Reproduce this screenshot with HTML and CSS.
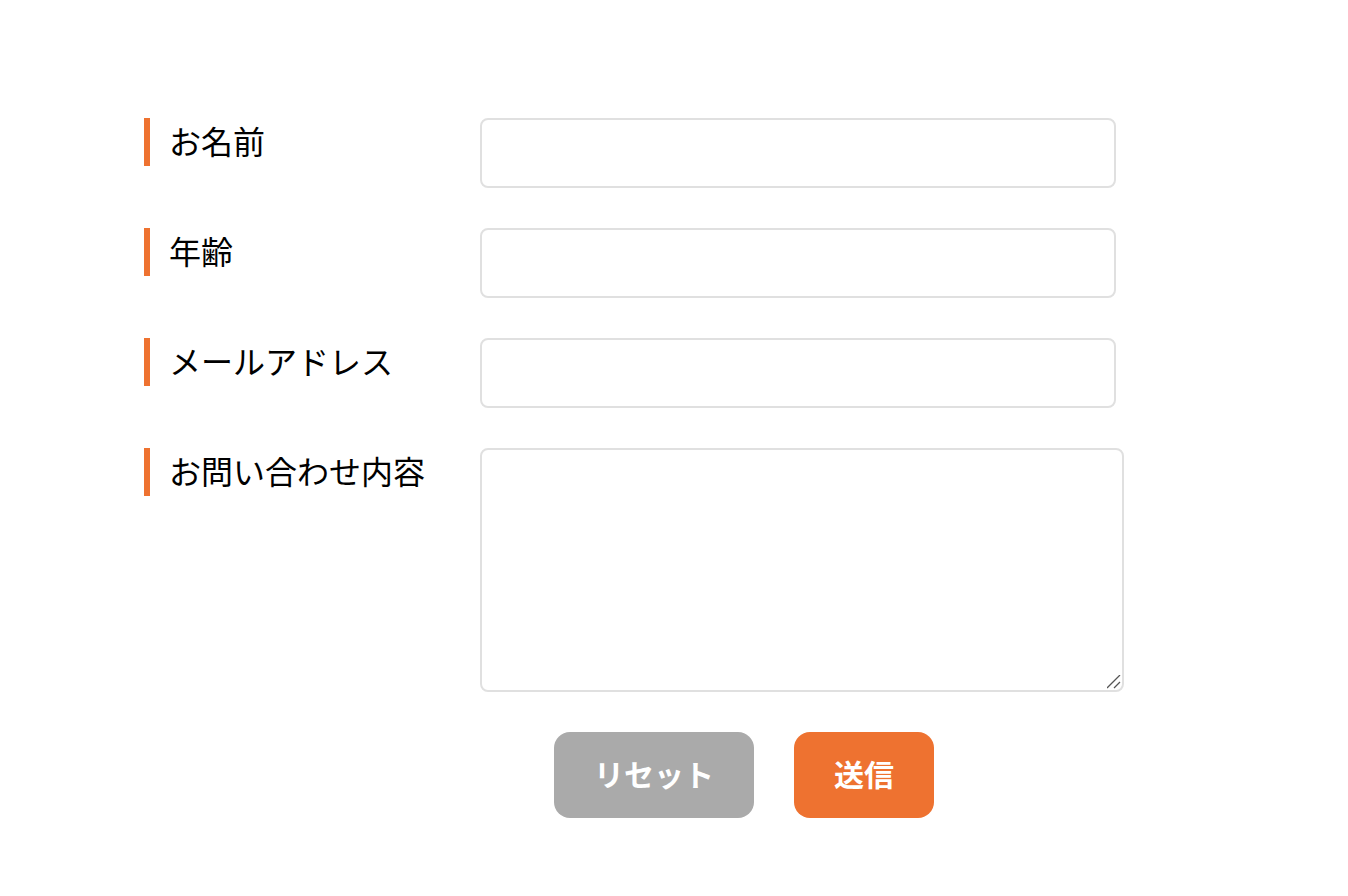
FILE: index.html
```html
<!DOCTYPE html>
<html lang="ja">
<head>
<meta charset="utf-8">
<title>お問い合わせ</title>
<link rel="stylesheet" href="styles.css">
</head>
<body>
<form class="form">
  <div class="row">
    <label class="label">お名前</label>
    <input class="field" type="text">
  </div>
  <div class="row">
    <label class="label">年齢</label>
    <input class="field" type="text">
  </div>
  <div class="row">
    <label class="label">メールアドレス</label>
    <input class="field" type="text">
  </div>
  <div class="row">
    <label class="label">お問い合わせ内容</label>
    <textarea class="area"></textarea>
  </div>
  <div class="buttons">
    <button type="button" class="btn btn-reset">リセット</button>
    <button type="button" class="btn btn-send">送信</button>
  </div>
</form>
</body>
</html>
```

FILE: styles.css
```css
html, body {
  margin: 0;
  padding: 0;
  background: #fff;
}
body {
  font-family: "Noto Sans CJK JP", "Noto Sans", sans-serif;
  color: #000;
}
.form {
  padding: 118px 0 0 144px;
  display: flex;
  flex-direction: column;
}
.row {
  display: flex;
  align-items: flex-start;
  margin-bottom: 40px;
}
.label {
  width: 311px;
  height: 48px;
  border-left: 6px solid #ee7230;
  padding-left: 19px;
  font-size: 32px;
  line-height: 44px;
  flex: none;
}
.field {
  box-sizing: border-box;
  width: 636px;
  height: 70px;
  border: 2px solid #e0e0e0;
  border-radius: 8px;
  margin: 0;
  padding: 0 12px;
  font-size: 20px;
  outline: none;
}
.area {
  box-sizing: border-box;
  width: 644px;
  height: 244px;
  border: 2px solid #e0e0e0;
  border-radius: 8px;
  margin: 0;
  padding: 10px 12px;
  font-size: 20px;
  outline: none;
}
.area::-webkit-resizer {
  background: url("data:image/svg+xml,%3Csvg xmlns='http://www.w3.org/2000/svg' width='16' height='16'%3E%3Cpath d='M2 15L15 2M9 15L15 9' stroke='%23555' stroke-width='1.3' fill='none'/%3E%3C/svg%3E") no-repeat right 1px bottom 1px;
}
.row:last-of-type {
  margin-bottom: 0;
}
.buttons {
  display: flex;
  gap: 40px;
  padding-left: 410px;
}
.btn {
  border: none;
  height: 86px;
  border-radius: 16px;
  color: #fff;
  font-family: "Noto Sans CJK JP", sans-serif;
  font-size: 30px;
  font-weight: bold;
  cursor: pointer;
  padding: 0 0 5px;
}
.btn-reset {
  width: 200px;
  background: #aaaaaa;
}
.btn-send {
  width: 140px;
  background: #ee7230;
}
```
